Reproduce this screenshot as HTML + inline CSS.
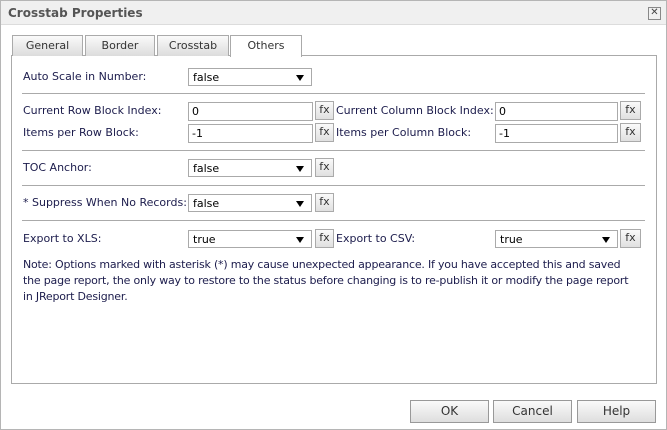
<html><head><style>
*{box-sizing:border-box}
body{margin:0;width:667px;height:430px;background:#fff;font-family:"DejaVu Sans","Liberation Sans",sans-serif;font-size:11px;color:#1c1c4c;position:relative;overflow:hidden}
.a{position:absolute}
.dlg{left:0;top:0;width:667px;height:430px;border:1px solid #b5b5b5;background:#fff}
.title{left:1px;top:1px;width:665px;height:24px;background:#f0f0f0;border-bottom:1px solid #dcdcdc;font-weight:bold;font-size:12px;color:#555;padding:5px 7px}
.close{left:648px;top:7px;width:13px;height:13px;border:1px solid #888;font-size:10px;line-height:10px;text-align:center;color:#444}
.tab{top:35px;height:21px;border:1px solid #aaa;border-bottom:none;background:linear-gradient(#fafafa,#dcdcdc);text-align:center;line-height:20px;color:#333}
.panel{left:11px;top:55px;width:646px;height:329px;border:1px solid #aaa;background:#fff}
.lbl{line-height:18px}
.inp{height:19px;border:1px solid #aaa;padding:1px 3px;line-height:15px;color:#000;background:#fff}
.sel{height:18px;border:1px solid #aaa;padding:1px 4px;line-height:15px;color:#000}
.sel:after{content:"";position:absolute;right:7px;top:6px;border-left:4px solid transparent;border-right:4px solid transparent;border-top:6px solid #000}
.fx{width:19px;height:19px;border:1px solid #aaa;background:linear-gradient(#fafafa,#e0e0e0);text-align:center;line-height:16px;color:#333}
.sep{left:22px;width:623px;height:1px;background:#aaa}
.btn{top:400px;height:23px;width:79px;border:1px solid #999;background:linear-gradient(#fafafa,#dedede);text-align:center;line-height:21px;color:#333;font-size:12px}
</style></head><body>
<div class="a dlg"></div>
<div class="a title">Crosstab Properties</div>
<div class="a close">✕</div>
<div class="a panel"></div>
<div class="a tab" style="left:12px;width:71px">General</div>
<div class="a tab" style="left:85px;width:70px">Border</div>
<div class="a tab" style="left:157px;width:72px">Crosstab</div>
<div class="a tab" style="left:230px;width:72px;height:22px;background:#fff">Others</div>

<div class="a lbl" style="left:23px;top:68px">Auto Scale in Number:</div>
<div class="a sel" style="left:188px;top:68px;width:124px">false</div>
<div class="a sep" style="top:93px"></div>

<div class="a lbl" style="left:23px;top:102px">Current Row Block Index:</div>
<div class="a inp" style="left:188px;top:102px;width:125px">0</div>
<div class="a fx" style="left:315px;top:101px">fx</div>
<div class="a lbl" style="left:336px;top:102px">Current Column Block Index:</div>
<div class="a inp" style="left:495px;top:102px;width:123px">0</div>
<div class="a fx" style="left:620px;top:101px;width:21px">fx</div>

<div class="a lbl" style="left:23px;top:124px">Items per Row Block:</div>
<div class="a inp" style="left:188px;top:124px;width:125px">-1</div>
<div class="a fx" style="left:315px;top:123px">fx</div>
<div class="a lbl" style="left:336px;top:124px">Items per Column Block:</div>
<div class="a inp" style="left:495px;top:124px;width:123px">-1</div>
<div class="a fx" style="left:620px;top:123px;width:21px">fx</div>
<div class="a sep" style="top:150px"></div>

<div class="a lbl" style="left:23px;top:159px">TOC Anchor:</div>
<div class="a sel" style="left:188px;top:159px;width:124px">false</div>
<div class="a fx" style="left:315px;top:158px">fx</div>
<div class="a sep" style="top:185px"></div>

<div class="a lbl" style="left:23px;top:194px">* Suppress When No Records:</div>
<div class="a sel" style="left:188px;top:194px;width:124px">false</div>
<div class="a fx" style="left:315px;top:193px">fx</div>
<div class="a sep" style="top:220px"></div>

<div class="a lbl" style="left:23px;top:230px">Export to XLS:</div>
<div class="a sel" style="left:188px;top:230px;width:124px">true</div>
<div class="a fx" style="left:315px;top:229px">fx</div>
<div class="a lbl" style="left:336px;top:230px">Export to CSV:</div>
<div class="a sel" style="left:495px;top:230px;width:123px">true</div>
<div class="a fx" style="left:620px;top:229px;width:21px">fx</div>

<div class="a" style="left:23px;top:257px;width:632px;line-height:16px;letter-spacing:-0.2px">Note: Options marked with asterisk (*) may cause unexpected appearance. If you have accepted this and saved<br>the page report, the only way to restore to the status before changing is to re-publish it or modify the page report<br>in JReport Designer.</div>

<div class="a btn" style="left:410px">OK</div>
<div class="a btn" style="left:493px">Cancel</div>
<div class="a btn" style="left:577px">Help</div>
</body></html>
